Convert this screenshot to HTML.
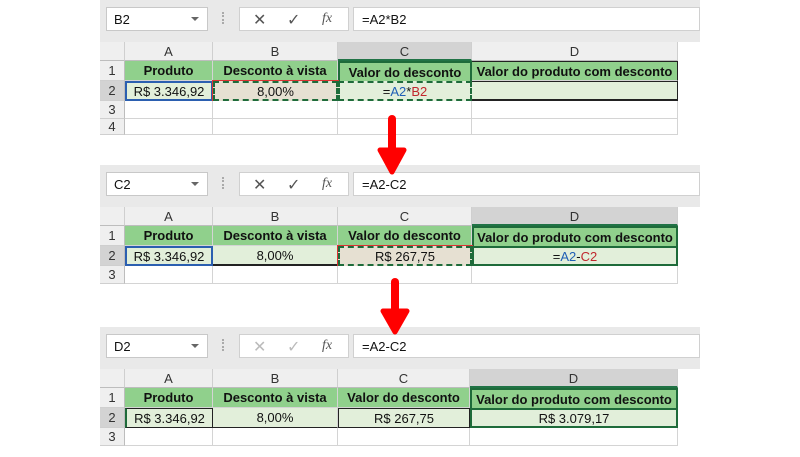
<!DOCTYPE html>
<html><head><meta charset="utf-8"><style>
*{margin:0;padding:0;box-sizing:border-box}
body{width:800px;height:450px;background:#fff;position:relative;overflow:hidden;font-family:"Liberation Sans",Arial,sans-serif;color:#111}
.p{position:absolute;left:0;width:800px;height:130px}
.strip{position:absolute;left:100px;top:0;width:600px;height:42px;background:#e9e9e9}
.nb{position:absolute;left:106px;top:7px;width:102px;height:24px;background:#fff;border:1px solid #c8c8c8;font-size:13px;padding:4px 0 0 7px}
.nb:after{content:"";position:absolute;right:8px;top:9px;border-left:4px solid transparent;border-right:4px solid transparent;border-top:4px solid #666}
.dots{position:absolute;left:222px;top:12px;width:2px;height:12px;border-left:2px dotted #aaa}
.fx{position:absolute;left:239px;top:7px;width:110px;height:24px;background:#fff;border:1px solid #d0d0d0;font-size:16px;color:#555}
.fx span{position:absolute;top:2px}
.fb{position:absolute;left:353px;top:7px;width:347px;height:24px;background:#fff;border:1px solid #d0d0d0;font-size:13px;padding:4px 0 0 8px}
.hd{position:absolute;top:42px;height:19px;background:#efefef;border-right:1px solid #cfcfcf;border-bottom:1px solid #bdbdbd;font-size:13px;text-align:center;line-height:19px;color:#333}
.rh{position:absolute;left:100px;width:25px;background:#efefef;border-bottom:1px solid #cfcfcf;border-right:1px solid #bdbdbd;font-size:13px;text-align:center;color:#333}
.c{position:absolute;font-size:13px;display:flex;align-items:center;justify-content:center;white-space:nowrap;border-right:1px solid #d4d4d4;border-bottom:1px solid #d4d4d4}
.g1{background:#90d08c;font-weight:bold;top:61px;height:20px}
.g2{background:#e2efda;top:81px;height:20px}
.w{top:101px;height:18px;background:#fff}
.sel{background:#d3d3d3!important}
.blue{color:#1f5fb5}.red{color:#c0272d}
</style></head><body>

<div class="p" style="top:0">
<div class="strip"></div><div class="nb">B2</div><div class="dots"></div>
<div class="fx"><span style="left:13px">✕</span><span style="left:47px">✓</span><span style="left:82px;font-style:italic;font-family:'Liberation Serif',serif;font-size:14px;top:3px">fx</span></div>
<div class="fb">=A2*B2</div>
<div class="hd" style="left:100px;width:25px"></div>
<div class="hd" style="left:125px;width:88px">A</div>
<div class="hd" style="left:213px;width:125px">B</div>
<div class="hd sel" style="left:338px;width:134px;border-bottom:2px solid #217346">C</div>
<div class="hd" style="left:472px;width:206px">D</div>
<div class="rh" style="top:61px;height:20px;line-height:20px">1</div>
<div class="rh sel" style="top:81px;height:20px;line-height:20px">2</div>
<div class="rh" style="top:101px;height:18px;line-height:18px">3</div>
<div class="rh" style="top:119px;height:16px;line-height:16px">4</div>
<div class="c g1" style="left:125px;width:88px">Produto</div>
<div class="c g1" style="left:213px;width:125px">Desconto à vista</div>
<div class="c g1" style="left:338px;width:134px;border:2px solid #1e6b3a;border-bottom:none">Valor do desconto</div>
<div class="c g1" style="left:472px;width:206px;border-top:1px solid #222;border-right:1px solid #222">Valor do produto com desconto</div>
<div class="c g2" style="left:125px;width:88px;border:2px solid #2b5fb0">R$ 3.346,92</div>
<div class="c g2" style="left:213px;width:125px;background:#e6e0d2;border:2px dashed #1e6b3a;outline:1px solid #d33">8,00%</div>
<div class="c g2" style="left:338px;width:134px;border:2px dashed #1e6b3a"><span>=</span><span class="blue">A2</span>*<span class="red">B2</span></div>
<div class="c g2" style="left:472px;width:206px;border:1px solid #222;border-left:none;border-bottom:2px solid #222"></div>
<div class="c w" style="left:125px;width:88px"></div><div class="c w" style="left:213px;width:125px"></div><div class="c w" style="left:338px;width:134px"></div><div class="c w" style="left:472px;width:206px"></div>
<div class="c w" style="left:125px;width:88px;top:119px;height:16px"></div><div class="c w" style="left:213px;width:125px;top:119px;height:16px"></div><div class="c w" style="left:338px;width:134px;top:119px;height:16px"></div><div class="c w" style="left:472px;width:206px;top:119px;height:16px"></div>
</div>

<div class="p" style="top:165px">
<div class="strip"></div><div class="nb">C2</div><div class="dots"></div>
<div class="fx"><span style="left:13px">✕</span><span style="left:47px">✓</span><span style="left:82px;font-style:italic;font-family:'Liberation Serif',serif;font-size:14px;top:3px">fx</span></div>
<div class="fb">=A2-C2</div>
<div class="hd" style="left:100px;width:25px"></div>
<div class="hd" style="left:125px;width:88px">A</div>
<div class="hd" style="left:213px;width:125px">B</div>
<div class="hd" style="left:338px;width:134px">C</div>
<div class="hd sel" style="left:472px;width:206px;border-bottom:2px solid #217346">D</div>
<div class="rh" style="top:61px;height:20px;line-height:20px">1</div>
<div class="rh sel" style="top:81px;height:20px;line-height:20px">2</div>
<div class="rh" style="top:101px;height:18px;line-height:18px">3</div>
<div class="c g1" style="left:125px;width:88px">Produto</div>
<div class="c g1" style="left:213px;width:125px">Desconto à vista</div>
<div class="c g1" style="left:338px;width:134px">Valor do desconto</div>
<div class="c g1" style="left:472px;width:206px;border:2px solid #1e6b3a;border-bottom:none">Valor do produto com desconto</div>
<div class="c g2" style="left:125px;width:88px;border:2px solid #2b5fb0">R$ 3.346,92</div>
<div class="c g2" style="left:213px;width:125px;border-bottom:2px solid #222">8,00%</div>
<div class="c g2" style="left:338px;width:134px;background:#e6e0d2;border:2px dashed #1e6b3a;outline:1px solid #d33">R$ 267,75</div>
<div class="c g2" style="left:472px;width:206px;border:2px solid #1e6b3a"><span>=</span><span class="blue">A2</span>-<span class="red">C2</span></div>
<div class="c w" style="left:125px;width:88px"></div><div class="c w" style="left:213px;width:125px"></div><div class="c w" style="left:338px;width:134px"></div><div class="c w" style="left:472px;width:206px"></div>
</div>

<div class="p" style="top:327px">
<div class="strip"></div><div class="nb">D2</div><div class="dots"></div>
<div class="fx" style="color:#bbb"><span style="left:13px">✕</span><span style="left:47px">✓</span><span style="left:82px;font-style:italic;font-family:'Liberation Serif',serif;font-size:14px;top:3px;color:#555">fx</span></div>
<div class="fb">=A2-C2</div>
<div class="hd" style="left:100px;width:25px"></div>
<div class="hd" style="left:125px;width:88px">A</div>
<div class="hd" style="left:213px;width:125px">B</div>
<div class="hd" style="left:338px;width:132px">C</div>
<div class="hd sel" style="left:470px;width:208px;border-bottom:2px solid #217346">D</div>
<div class="rh" style="top:61px;height:20px;line-height:20px">1</div>
<div class="rh sel" style="top:81px;height:20px;line-height:20px">2</div>
<div class="rh" style="top:101px;height:18px;line-height:18px">3</div>
<div class="c g1" style="left:125px;width:88px">Produto</div>
<div class="c g1" style="left:213px;width:125px">Desconto à vista</div>
<div class="c g1" style="left:338px;width:132px">Valor do desconto</div>
<div class="c g1" style="left:470px;width:208px;border:2px solid #1e6b3a;border-bottom:none">Valor do produto com desconto</div>
<div class="c g2" style="left:125px;width:88px;border:1px solid #222;border-left:2px solid #1e6b3a">R$ 3.346,92</div>
<div class="c g2" style="left:213px;width:125px;border-bottom:1px solid #222">8,00%</div>
<div class="c g2" style="left:338px;width:132px;border:1px solid #222">R$ 267,75</div>
<div class="c g2" style="left:470px;width:208px;border:2px solid #1e6b3a">R$ 3.079,17</div>
<div class="c w" style="left:125px;width:88px"></div><div class="c w" style="left:213px;width:125px"></div><div class="c w" style="left:338px;width:132px"></div><div class="c w" style="left:470px;width:208px"></div>
</div>

<svg style="position:absolute;left:0;top:0" width="800" height="450">
<path d="M392 119 L392 158" stroke="#f00" stroke-width="8" stroke-linecap="round"/>
<path d="M380 150 L392 172 L404 150 Z" fill="#f00" stroke="#f00" stroke-width="5" stroke-linejoin="round"/>
<path d="M395 282 L395 318" stroke="#f00" stroke-width="8" stroke-linecap="round"/>
<path d="M383 311 L395 332 L407 311 Z" fill="#f00" stroke="#f00" stroke-width="5" stroke-linejoin="round"/>
</svg>
</body></html>
